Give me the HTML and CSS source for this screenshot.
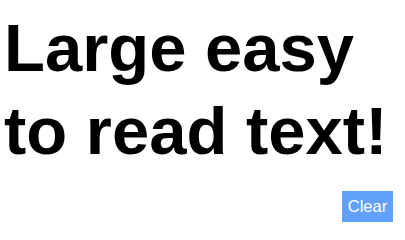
FILE: index.html
```html
<!DOCTYPE html>
<html>
<head>
<meta charset="utf-8">
<link rel="stylesheet" href="styles.css">
</head>
<body>
<div class="page">
  <h1 class="big-text">Large easy to read text!</h1>
  <div class="actions">
    <button class="clear-btn">Clear</button>
  </div>
</div>
</body>
</html>
```
FILE: styles.css
```css
html, body {
  margin: 0;
  padding: 0;
  background: #ffffff;
}
.page {
  width: 405px;
  height: 228px;
  box-sizing: border-box;
  padding: 6px 12px 6px 4px;
  display: flex;
  flex-direction: column;
  font-family: "Liberation Sans", Arial, Helvetica, sans-serif;
}
.big-text {
  margin: 0;
  font-size: 67px;
  line-height: 83px;
  font-weight: bold;
  color: #000;
}
.actions {
  margin-top: auto;
  display: flex;
  justify-content: flex-end;
}
.clear-btn {
  border: none;
  background: #62a1f9;
  color: #fff;
  font-family: "Liberation Sans", Arial, Helvetica, sans-serif;
  font-size: 16.5px;
  width: 51px;
  height: 31px;
  padding: 0;
  margin: 0;
}
```
